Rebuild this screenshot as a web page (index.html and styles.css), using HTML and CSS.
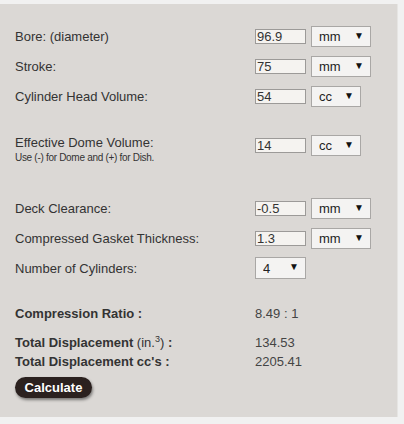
FILE: index.html
```html
<!DOCTYPE html>
<html lang="en">
<head>
    <meta charset="UTF-8">
    <meta name="viewport" content="width=device-width, initial-scale=1.0">
    <title>Compression Ratio Calculator</title>
    <link rel="stylesheet" href="styles.css">
</head>
<body>
    <div class="panel">
        <form class="calc">
            <div class="row">
                <label class="label" for="bore">Bore: (diameter)</label>
                <div class="controls">
                    <input class="num" id="bore" type="text" value="96.9">
                    <span class="pick"><select><option>mm</option><option>in</option></select></span>
                </div>
            </div>
            <div class="row">
                <label class="label" for="stroke">Stroke:</label>
                <div class="controls">
                    <input class="num" id="stroke" type="text" value="75">
                    <span class="pick"><select><option>mm</option><option>in</option></select></span>
                </div>
            </div>
            <div class="row">
                <label class="label" for="head">Cylinder Head Volume:</label>
                <div class="controls">
                    <input class="num" id="head" type="text" value="54">
                    <span class="pick narrow"><select><option>cc</option><option>ci</option></select></span>
                </div>
            </div>

            <div class="row dome">
                <div class="label">
                    <label for="dome">Effective Dome Volume:</label>
                    <div class="note">Use (-) for Dome and (+) for Dish.</div>
                </div>
                <div class="controls">
                    <input class="num" id="dome" type="text" value="14">
                    <span class="pick narrow"><select><option>cc</option><option>ci</option></select></span>
                </div>
            </div>

            <div class="row deck">
                <label class="label" for="deck">Deck Clearance:</label>
                <div class="controls">
                    <input class="num" id="deck" type="text" value="-0.5">
                    <span class="pick"><select><option>mm</option><option>in</option></select></span>
                </div>
            </div>
            <div class="row">
                <label class="label" for="gasket">Compressed Gasket Thickness:</label>
                <div class="controls">
                    <input class="num" id="gasket" type="text" value="1.3">
                    <span class="pick"><select><option>mm</option><option>in</option></select></span>
                </div>
            </div>
            <div class="row">
                <label class="label" for="cyl">Number of Cylinders:</label>
                <div class="controls">
                    <span class="pick count"><select id="cyl"><option>4</option><option>6</option><option>8</option></select></span>
                </div>
            </div>

            <div class="result first">
                <span class="label"><strong>Compression Ratio :</strong></span>
                <span class="value">8.49 : 1</span>
            </div>
            <div class="result">
                <span class="label"><strong>Total Displacement</strong> (in.<sup>3</sup>) <strong>:</strong></span>
                <span class="value">134.53</span>
            </div>
            <div class="result">
                <span class="label"><strong>Total Displacement cc's :</strong></span>
                <span class="value">2205.41</span>
            </div>

            <button type="button" class="calc-btn">Calculate</button>
        </form>
    </div>
</body>
</html>
```

FILE: styles.css
```css
body {
    margin: 0;
    background: #f1f1f1;
    font-family: "Liberation Sans", Arial, sans-serif;
    font-size: 13px;
    color: #333;
}
.panel {
    width: 398px;
    margin-top: 4px;
    background: #dbd8d5;
    border-right: 1px solid #e6e5e3;
    padding: 17px 0 19px 15px;
    box-sizing: border-box;
}
.row {
    display: flex;
    align-items: center;
    height: 30px;
}
.label {
    width: 240px;
    flex: none;
}
.controls {
    display: flex;
    align-items: center;
    gap: 5px;
}
.row.dome {
    margin-top: 24px;
    align-items: flex-start;
    height: 34px;
}
.row.dome .label {
    line-height: 16px;
}
.note {
    font-size: 10px;
    line-height: 13px;
    letter-spacing: -0.3px;
}
.row.deck {
    margin-top: 24px;
}
.num {
    width: 51px;
    height: 15px;
    box-sizing: border-box;
    margin: 0;
    padding: 0 1px;
    border: 1px solid #9c9a98;
    background: #f5f3f0;
    font-family: inherit;
    font-size: 13px;
    color: #333;
}
.pick {
    position: relative;
    display: block;
}
.pick select {
    -webkit-appearance: none;
    appearance: none;
    width: 60px;
    height: 21px;
    margin: 0;
    padding: 0 0 0 7px;
    border: 1px solid #a9a7a5;
    border-radius: 0;
    background: #f4f3f2;
    font-family: inherit;
    font-size: 13px;
    color: #222;
}
.pick::after {
    content: "\25BC";
    position: absolute;
    right: 7px;
    top: 4px;
    font-size: 10px;
    color: #111;
    pointer-events: none;
}
.pick.narrow select {
    width: 50px;
}
.pick.count select {
    width: 51px;
    height: 22px;
}
.result {
    display: flex;
    height: 19px;
    line-height: 19px;
}
.result.first {
    margin-top: 21px;
    margin-bottom: 10px;
}
.result sup {
    font-size: 9px;
    line-height: 0;
}
.value {
    color: #444;
}
.calc-btn {
    margin-top: 6px;
    width: 77px;
    height: 21px;
    padding: 0;
    border: none;
    border-radius: 11px;
    background: #2b211f;
    color: #fff;
    font-family: inherit;
    font-size: 13px;
    font-weight: bold;
    box-shadow: 1px 2px 3px rgba(0, 0, 0, 0.45);
}
```
